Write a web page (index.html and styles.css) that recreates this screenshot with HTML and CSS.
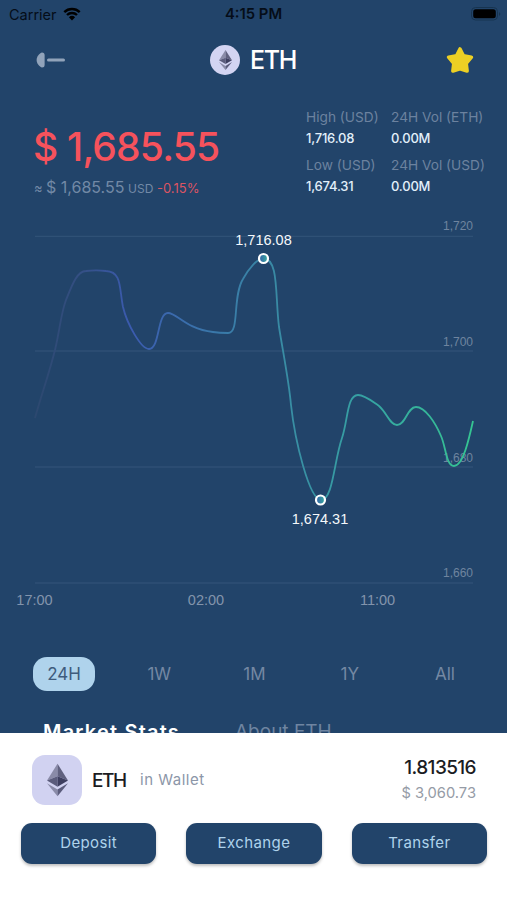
FILE: index.html
```html
<!DOCTYPE html>
<html lang="en">
<head>
  <meta charset="UTF-8">
  <meta name="viewport" content="width=device-width, initial-scale=1">
  <title>ETH</title>
  <link rel="stylesheet" href="styles.css">
</head>
<body>
  <!-- shared ethereum mark -->
  <svg class="defs" width="0" height="0">
    <symbol id="eth" viewBox="0 0 22 34">
      <path d="M11 0L0 17.5 11 13z" fill="#8a8ba8"/>
      <path d="M11 0L22 17.5 11 13z" fill="#60617f"/>
      <path d="M11 13L0 17.5 11 24z" fill="#5b5c7c"/>
      <path d="M11 13L22 17.5 11 24z" fill="#3e3f60"/>
      <path d="M0 20.5L11 27V34z" fill="#8a8ba8"/>
      <path d="M22 20.5L11 27V34z" fill="#5b5c7c"/>
    </symbol>
  </svg>

  <main class="content">
    <div class="statusBar">
      <div class="carrier">
        <span>Carrier</span>
        <svg class="wifi" width="18" height="14" viewBox="0 0 18 14">
          <path d="M1.3 5.2a11 11 0 0 1 15.4 0M4 8a7.2 7.2 0 0 1 10 0" fill="none" stroke="#000" stroke-width="2.4"/>
          <path d="M5.9 10.3a4.5 4.5 0 0 1 6.2 0L9 13.5z" fill="#000"/>
        </svg>
      </div>
      <div class="clock">4:15 PM</div>
      <svg class="battery" width="30" height="14" viewBox="0 0 30 14">
        <rect x=".5" y=".5" width="26" height="12.5" rx="4" fill="none" stroke="#173450"/>
        <rect x="2.2" y="2.3" width="22.6" height="9" rx="2.5" fill="#000"/>
        <path d="M28 5v4q1.3-.8 1.3-2T28 5z" fill="#173450"/>
      </svg>
    </div>

    <header class="header">
      <svg class="back" width="30" height="16" viewBox="0 0 30 16">
        <path d="M5.8.5Q8.6.4 8.6 3v10q0 2.6-2.8 2.5C3 14.500.6 11 .6 8S3 1.5 5.8.5z" fill="#91a3ba"/>
        <rect x="11" y="6.5" width="18" height="3" rx="1.5" fill="#91a3ba"/>
      </svg>
      <div class="title">
        <span class="coin"><svg width="13" height="20"><use href="#eth"/></svg></span>
        <h1>ETH</h1>
      </div>
      <svg class="star" width="30" height="30" viewBox="0 0 30 30">
        <path d="M15 4l3.4 6.900 8 1.300-5.200 6.200.9 7.600-7.100-2.200L7.900 26l.9-7.600-5.200-6.200 8-1.300z" fill="#edd024" stroke="#edd024" stroke-width="3.6" stroke-linejoin="round"/>
      </svg>
    </header>

    <section class="summary">
      <div class="price">
        <div class="amount">$ 1,685.55</div>
        <div class="approx"><span class="sign">≈</span><span class="value">$ 1,685.55</span><span class="unit">USD</span><span class="change">-0.15%</span></div>
      </div>
      <dl class="stats">
        <div><dt>High (USD)</dt><dd>1,716.08</dd></div>
        <div><dt>24H Vol (ETH)</dt><dd>0.00M</dd></div>
        <div><dt>Low (USD)</dt><dd>1,674.31</dd></div>
        <div><dt>24H Vol (USD)</dt><dd>0.00M</dd></div>
      </dl>
    </section>

    <svg class="chart" width="507" height="402" viewBox="0 213 507 402">
      <defs>
        <linearGradient id="line" gradientUnits="userSpaceOnUse" x1="35" y1="0" x2="473" y2="0">
          <stop offset="0" stop-color="#2c486f"/>
          <stop offset=".1" stop-color="#344f83"/>
          <stop offset=".22" stop-color="#3b5bb0"/>
          <stop offset=".38" stop-color="#3a74ab"/>
          <stop offset=".55" stop-color="#398aa4"/>
          <stop offset=".75" stop-color="#36a2a3"/>
          <stop offset="1" stop-color="#35c592"/>
        </linearGradient>
        <linearGradient id="dot" x1="0" y1="0" x2="1" y2="0">
          <stop offset="0" stop-color="#365fa8"/>
          <stop offset="1" stop-color="#36ad9e"/>
        </linearGradient>
      </defs>
      <path class="grid" d="M35 236.3H473M35 351H473M35 467H473M35 583H473"/>
      <g class="yAxis">
        <text x="473" y="230">1,720</text>
        <text x="473" y="346">1,700</text>
        <text x="473" y="461.5">1,680</text>
        <text x="473" y="577">1,660</text>
      </g>
      <path class="line" stroke="url(#line)" d="M35 418C41 396 49 374 55 350C60 329 61 313 66 300C72 285 77 271 86 271C93 270 99 270 106 271C122 272 119 287 123 307C127 324 141 349 149 349C160 349 157 313 168 313C177 313 186 329 213 332C219 333 226 333 228 333C240 333 232 297 243 279C249 268 257 259 263 258.5C279 258 275 295 279 327C283 352 289 382 291 405C295 441 309 499 321 500C333 500 334 461 342 438C348 420 347 395 358 395C365 395 373 402 379 406C387 413 390 425 397 425C406 425 407 407 416 407C425 407 435 422 441 436C446 447 446 466 454 466C463 466 469 439 473 421"/>
      <g class="points">
        <circle cx="263.500" cy="258.5" r="4.5" fill="url(#dot)"/>
        <circle cx="320.5" cy="500" r="4.5" fill="url(#dot)"/>
        <text x="263.5" y="245">1,716.08</text>
        <text x="320" y="524">1,674.31</text>
      </g>
      <g class="xAxis">
        <text x="34.5" y="605">17:00</text>
        <text x="206" y="605">02:00</text>
        <text x="377.500" y="605">11:00</text>
      </g>
    </svg>

    <nav class="ranges">
      <button class="active">24H</button>
      <button>1W</button>
      <button>1M</button>
      <button>1Y</button>
      <button>All</button>
    </nav>

    <nav class="tabs">
      <span class="current">Market Stats</span>
      <span>About ETH</span>
    </nav>
  </main>

  <footer class="wallet">
    <div class="holding">
      <span class="tile"><svg width="21" height="34"><use href="#eth"/></svg></span>
      <span class="symbol">ETH</span>
      <span class="where">in Wallet</span>
      <div class="balance">
        <div class="coins">1.813516</div>
        <div class="fiat">$ 3,060.73</div>
      </div>
    </div>
    <div class="actions">
      <button>Deposit</button>
      <button>Exchange</button>
      <button>Transfer</button>
    </div>
  </footer>
</body>
</html>
```
FILE: styles.css
```css
* {
  box-sizing: border-box;
}

body {
  margin: 0;
  height: 900px;
  display: flex;
  flex-direction: column;
  overflow: hidden;
  background: #22446a;
  font-family: Inter, "Open Sans", sans-serif;
}

button {
  border: none;
  padding: 0;
  background: none;
  font-family: inherit;
}

.defs {
  position: absolute;
}

.content {
  height: 733px;
  overflow: hidden;
  flex-shrink: 0;
}

/* status bar */
.statusBar {
  height: 28px;
  padding: 0 6px 0 9px;
  display: grid;
  grid-template-columns: 1fr auto 1fr;
  align-items: center;
  color: #050d18;
  font-size: 14.5px;
}

.carrier {
  display: flex;
  align-items: center;
  gap: 6px;
}

.clock {
  margin-right: 3px;
  font-weight: 600;
  font-size: 14.8px;
}

.battery {
  justify-self: end;
}

/* header */
.header {
  height: 64px;
  padding: 0 32px 0 36px;
  display: grid;
  grid-template-columns: 1fr auto 1fr;
  align-items: center;
}

.title {
  margin-right: 5px;
  display: flex;
  align-items: center;
  gap: 10px;
}

.coin {
  width: 30px;
  height: 30px;
  border-radius: 50%;
  background: #d3d4f2;
  display: flex;
  align-items: center;
  justify-content: center;
}

h1 {
  margin: 0;
  color: #fff;
  font-size: 25px;
  font-weight: 500;
  letter-spacing: -1.4px;
}

.star {
  justify-self: end;
}

/* price + stats */
.summary {
  height: 121px;
  padding: 15px 0 0 33px;
  display: flex;
}

.price {
  width: 273px;
  padding-top: 15px;
}

.amount {
  color: #f6525c;
  font-size: 39px;
  line-height: 50px;
  font-weight: 500;
  letter-spacing: -0.8px;
}

.approx {
  padding-left: 1px;
  display: flex;
  align-items: baseline;
  line-height: 30px;
  color: #7289a6;
}

.sign {
  width: 12px;
  font-size: 13px;
}

.value {
  width: 82px;
  font-size: 16px;
}

.unit {
  width: 29px;
  font-size: 12px;
}

.change {
  color: #dc5463;
  font-size: 13px;
}

.stats {
  margin: 0;
  display: grid;
  grid-template-columns: 85px 110px;
  grid-auto-rows: 48px;
  font-size: 13.7px;
  line-height: 21px;
  white-space: nowrap;
}

.stats dt {
  color: #6c829f;
}

.stats dd {
  margin: 0;
  color: #e3f0fa;
  font-size: 13px;
  font-weight: 500;
  letter-spacing: -0.2px;
}

/* chart */
.chart {
  display: block;
  font-family: "Liberation Sans", Arial, sans-serif;
}

.grid {
  stroke: #34557a;
  stroke-width: 1;
}

.yAxis text {
  fill: #6f849f;
  font-size: 12px;
  text-anchor: end;
}

.line {
  fill: none;
  stroke-width: 1.8;
}

.points circle {
  stroke: #fff;
  stroke-width: 2.2;
}

.points text {
  fill: #f5f8fb;
  font-size: 14.5px;
  text-anchor: middle;
}

.xAxis text {
  fill: #8294ac;
  font-size: 14.5px;
  text-anchor: middle;
}

/* time range buttons */
.ranges {
  margin-top: 42px;
  padding: 0 31px 0 33px;
  display: flex;
  justify-content: space-between;
}

.ranges button {
  width: 62px;
  height: 34px;
  border-radius: 14px;
  color: #7488a3;
  font-size: 17px;
}

.ranges .active {
  background: #afd3ec;
  color: #3e5b7c;
}

/* runs on under the wallet sheet */
.tabs {
  padding: 28px 0 0 43px;
  display: flex;
  color: #6f85a1;
  font-size: 19px;
  line-height: 26px;
  white-space: nowrap;
}

.tabs .current {
  width: 192px;
  color: #fff;
  font-size: 20px;
  font-weight: 600;
  letter-spacing: 1.2px;
}

/* wallet sheet */
.wallet {
  flex: 1;
  background: #fff;
  padding: 22px 20px 0 21px;
}

.holding {
  height: 50px;
  padding: 0 11px;
  display: flex;
  align-items: center;
}

.tile {
  width: 50px;
  height: 50px;
  border-radius: 13px;
  background: #d1d2f1;
  display: flex;
  align-items: center;
  justify-content: center;
}

.symbol {
  width: 48px;
  margin-left: 10px;
  color: #1b1c1f;
  font-size: 19px;
  font-weight: 500;
  letter-spacing: -1.4px;
}

.where {
  margin-top: -2px;
  color: #8c96a8;
  font-size: 15px;
  letter-spacing: 0.5px;
}

.balance {
  margin-left: auto;
  text-align: right;
}

.coins {
  color: #1b1c1f;
  font-size: 19px;
  line-height: 26px;
  font-weight: 500;
  letter-spacing: -0.6px;
}

.fiat {
  color: #959ba6;
  font-size: 14.7px;
  line-height: 24px;
}

.actions {
  margin-top: 18px;
  display: grid;
  grid-template-columns: repeat(3, 1fr);
  gap: 30px;
}

.actions button {
  height: 41px;
  padding-bottom: 3px;
  border-radius: 11px;
  background: #22446a;
  box-shadow: 0 2px 3px rgba(0, 0, 0, 0.25);
  color: #afd3ec;
  font-size: 15px;
  letter-spacing: 0.4px;
}
```
